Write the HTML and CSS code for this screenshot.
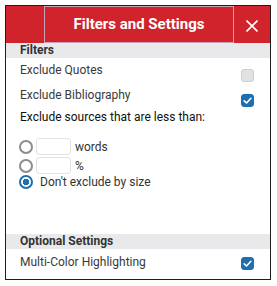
FILE: index.html
```html
<!DOCTYPE html>
<html lang="en">
<head>
    <meta charset="UTF-8">
    <title>Filters and Settings</title>
    <link rel="stylesheet" href="styles.css">
</head>
<body>
    <div class="panel">
        <div class="header">
            <div class="header-side"></div>
            <h2 class="title">Filters and Settings</h2>
            <div class="close">
                <svg width="12" height="12" viewBox="0 0 12 12">
                    <path d="M0.5 0.5 L11.5 11.5 M11.5 0.5 L0.5 11.5" stroke="#fff" stroke-width="1.6" fill="none"/>
                </svg>
            </div>
        </div>

        <div class="section-head">Filters</div>

        <div class="row row-first">
            <span class="label">Exclude Quotes</span>
            <span class="checkbox"></span>
        </div>
        <div class="row row-second">
            <span class="label">Exclude Bibliography</span>
            <span class="checkbox checked">
                <svg width="13" height="13" viewBox="0 0 13 13">
                    <path d="M3.2 6.8 L5.5 9 L9.9 4.3" stroke="#fff" stroke-width="1.6" fill="none" stroke-linecap="round" stroke-linejoin="round"/>
                </svg>
            </span>
        </div>
        <div class="sources">Exclude sources that are less than:</div>

        <div class="radios">
            <div class="radio-row">
                <span class="radio"></span>
                <span class="num-input"></span>
                <span class="unit">words</span>
            </div>
            <div class="radio-row">
                <span class="radio"></span>
                <span class="num-input"></span>
                <span class="unit">%</span>
            </div>
            <div class="radio-row radio-last">
                <span class="radio checked"></span>
                <span class="unit">Don't exclude by size</span>
            </div>
        </div>

        <div class="section-head optional">Optional Settings</div>
        <div class="row row-multi">
            <span class="label">Multi-Color Highlighting</span>
            <span class="checkbox checked">
                <svg width="13" height="13" viewBox="0 0 13 13">
                    <path d="M3.2 6.8 L5.5 9 L9.9 4.3" stroke="#fff" stroke-width="1.6" fill="none" stroke-linecap="round" stroke-linejoin="round"/>
                </svg>
            </span>
        </div>
    </div>
</body>
</html>
```

FILE: styles.css
```css
* {
    margin: 0;
    padding: 0;
    box-sizing: border-box;
}

body {
    font-family: Roboto, "Liberation Sans", sans-serif;
    background: #fff;
    color: #3a3a3a;
}

.panel {
    margin: 5px 0 0 5px;
    width: 266px;
    height: 275px;
    border: 1px solid #1e1e1e;
    display: flex;
    flex-direction: column;
}

.header {
    display: flex;
    height: 37px;
    background-color: #d0232b;
}

.header-side {
    width: 38px;
}

.title {
    flex: 1;
    border: 1px solid #c7a2b8;
    color: #fff;
    font-size: 15px;
    font-weight: bold;
    text-align: center;
    line-height: 35px;
}

.close {
    width: 36px;
    display: flex;
    align-items: center;
    justify-content: center;
    padding-top: 3px;
}

.section-head {
    height: 15px;
    line-height: 15px;
    background-color: #e9e9eb;
    padding-left: 14px;
    font-size: 12px;
    font-weight: bold;
    color: #333;
}

.row {
    display: flex;
    justify-content: space-between;
    align-items: flex-start;
    padding: 0 16px 0 14px;
}

.label {
    font-size: 12px;
    line-height: 16px;
}

.row-first {
    margin-top: 4px;
    height: 25px;
}

.row-second {
    height: 22px;
}

.checkbox {
    width: 13px;
    height: 13px;
    margin-top: 7px;
    border-radius: 3px;
    background-color: #e2e2e2;
    border: 1px solid #cfcfcf;
    display: flex;
}

.checkbox.checked {
    background-color: #1e6fb0;
    border-color: #1e6fb0;
}

.checkbox svg {
    margin: -1px;
}

.sources {
    padding-left: 14px;
    font-size: 12px;
    line-height: 16px;
    color: #111;
}

.radios {
    margin-top: 12px;
    padding-left: 13px;
}

.radio-row {
    display: flex;
    align-items: center;
    height: 19px;
}

.radio-last {
    height: 14px;
}

.radio {
    width: 14px;
    height: 14px;
    border: 2px solid #8c8c8c;
    border-radius: 50%;
    margin-right: 3px;
}

.radio.checked {
    border-color: #1e6fb0;
    background: radial-gradient(circle, #1e6fb0 0 3px, #fff 3.5px);
    margin-right: 7px;
}

.num-input {
    width: 35px;
    height: 17px;
    border: 1px solid #e3e3e3;
    border-radius: 3px;
    margin-right: 4px;
}

.unit {
    font-size: 12px;
    color: #333;
}

.optional {
    margin-top: auto;
}

.row-multi {
    padding-top: 5px;
    height: 30px;
}

.row-multi .checkbox {
    margin-top: 3px;
}
```
